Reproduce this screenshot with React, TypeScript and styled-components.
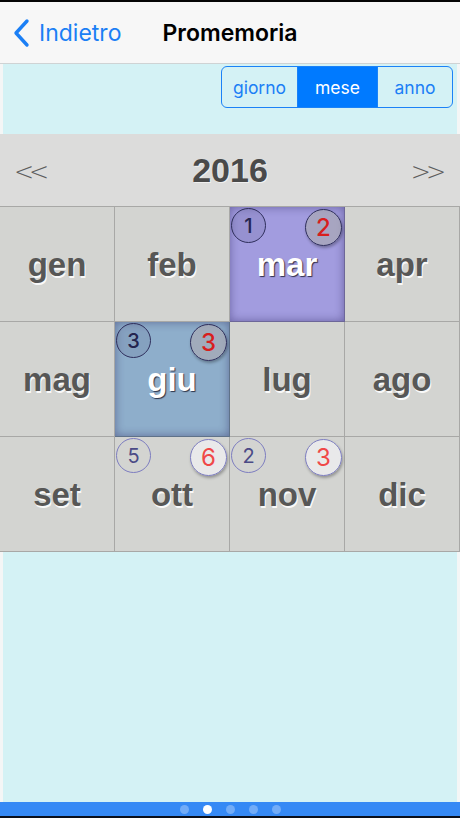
import React from "react";
import styled, { createGlobalStyle } from "styled-components";

const Global = createGlobalStyle`
  html, body { margin: 0; padding: 0; background: #000; }
  #root { width: 460px; }
`;

const Screen = styled.div`
  width: 460px;
  height: 818px;
  box-sizing: border-box;
  border-top: 2px solid #050505;
  border-bottom: 2px solid #0a0f1c;
  display: flex;
  flex-direction: column;
  font-family: "Liberation Sans", Arial, sans-serif;
  overflow: hidden;
`;

const NavBar = styled.div`
  height: 62px;
  flex: none;
  box-sizing: border-box;
  background: #f7f7f7;
  border-bottom: 1px solid #cfd3d4;
  display: flex;
  align-items: center;
  position: relative;
`;

const BackButton = styled.div`
  display: flex;
  align-items: center;
  gap: 9px;
  padding-left: 12px;
  color: #1b7ff5;
  font-family: Inter, "Liberation Sans", sans-serif;
  font-size: 23px;
`;

const Title = styled.div`
  position: absolute;
  left: 0;
  right: 0;
  text-align: center;
  pointer-events: none;
  font-family: Inter, "Liberation Sans", sans-serif;
  font-weight: 600;
  font-size: 23px;
  color: #000;
`;

const Content = styled.div`
  flex: 1;
  background: #d4f2f5;
  border-left: 3px solid #f4f6f6;
  border-right: 3px solid #f4f6f6;
  display: flex;
  flex-direction: column;
`;

const SegRow = styled.div`
  display: flex;
  justify-content: flex-end;
  padding: 2px 4px 0 0;
`;

const Segmented = styled.div`
  display: flex;
  height: 42px;
  box-sizing: border-box;
  border: 1.5px solid #1b82f7;
  border-radius: 6px;
  overflow: hidden;
`;

const Segment = styled.div<{ $active?: boolean; $w: number }>`
  width: ${(p) => p.$w}px;
  display: flex;
  align-items: center;
  justify-content: center;
  font-family: Inter, "Liberation Sans", sans-serif;
  font-size: 17.5px;
  color: ${(p) => (p.$active ? "#ffffff" : "#1b7ff5")};
  background: ${(p) => (p.$active ? "#007aff" : "transparent")};
  & + & {
    border-left: 1px solid #1b82f7;
  }
`;

const Calendar = styled.div`
  margin: 26px -3px 0;
  display: flex;
  flex-direction: column;
`;

const YearBar = styled.div`
  height: 72px;
  background: #dcdcdb;
  display: flex;
  align-items: center;
  justify-content: space-between;
  padding: 0 14px 0 14px;
  position: relative;
`;

const Arrow = styled.div`
  font-size: 24px;
  color: #5e5e5e;
  letter-spacing: -5px;
  font-family: "DejaVu Sans", sans-serif;
  font-weight: 200;
  margin-top: 4px;
  padding-right: 5px;
`;

const Year = styled.div`
  position: absolute;
  left: 0;
  right: 0;
  text-align: center;
  font-size: 34px;
  font-weight: bold;
  color: #4a4a4a;
  text-shadow: 1px 1px 0 rgba(255, 255, 255, 0.6);
`;

const Grid = styled.div`
  display: grid;
  grid-template-columns: repeat(4, 115px);
  border-top: 1px solid #a8a8a6;
`;

const Cell = styled.div<{ $bg?: string; $edge?: string }>`
  position: relative;
  height: 115px;
  box-sizing: border-box;
  background: ${(p) => p.$bg ?? "#d3d4d1"};
  border-right: 1px solid ${(p) => p.$edge ?? "#a8a8a6"};
  border-bottom: 1px solid ${(p) => p.$edge ?? "#a8a8a6"};
  box-shadow: ${(p) => (p.$bg ? "inset 0 0 10px rgba(40, 30, 90, 0.45)" : "none")};
  display: flex;
  align-items: center;
  justify-content: center;
`;

const MonthName = styled.span<{ $selected?: boolean }>`
  font-size: 33px;
  font-weight: bold;
  color: ${(p) => (p.$selected ? "#ffffff" : "#575756")};
  text-shadow: ${(p) =>
    p.$selected ? "1px 1px 1px rgba(20,20,40,0.8)" : "1px 1.5px 0 rgba(255,255,255,0.9)"};
  margin-top: 2px;
`;

const Badge = styled.div<{ $side: "left" | "right"; $dark?: boolean }>`
  position: absolute;
  top: ${(p) => (p.$side === "left" ? 1 : 2)}px;
  ${(p) => (p.$side === "left" ? "left: 1px;" : "right: 2px;")}
  width: ${(p) => (p.$side === "left" ? 35 : 37)}px;
  height: ${(p) => (p.$side === "left" ? 35 : 37)}px;
  box-sizing: border-box;
  border-radius: 50%;
  display: flex;
  align-items: center;
  justify-content: center;
  font-family: Inter, "Liberation Sans", sans-serif;
  font-size: ${(p) => (p.$side === "left" ? 20 : 24)}px;
  font-weight: ${(p) => (p.$dark ? 500 : 400)};
  border: ${(p) => (p.$dark ? "1.5px solid #2f2f5c" : "1px solid #7d7dc0")};
  color: ${(p) =>
    p.$side === "left" ? (p.$dark ? "#25254f" : "#4b4b86") : p.$dark ? "#d81e1e" : "#f04848"};
  background: ${(p) =>
    p.$side === "left"
      ? p.$dark
        ? "rgba(90,90,130,0.15)"
        : "transparent"
      : p.$dark
      ? "rgba(170,170,180,0.7)"
      : "rgba(236,236,238,0.85)"};
  box-shadow: ${(p) =>
    p.$side === "right" ? "1px 2px 3px rgba(0,0,0,0.3)" : "none"};
`;

const Spacer = styled.div`
  flex: 1;
`;

const PageBar = styled.div`
  height: 14px;
  flex: none;
  background: #3589f5;
  display: flex;
  align-items: center;
  justify-content: center;
  gap: 14px;
`;

const Dot = styled.div<{ $active?: boolean }>`
  width: 9px;
  height: 9px;
  border-radius: 50%;
  background: ${(p) => (p.$active ? "#ffffff" : "rgba(255,255,255,0.3)")};
`;

type Month = {
  name: string;
  bg?: string;
  edge?: string;
  left?: number;
  right?: number;
};

const months: Month[] = [
  { name: "gen" },
  { name: "feb" },
  { name: "mar", bg: "#a29cdf", edge: "#6d6799", left: 1, right: 2 },
  { name: "apr" },
  { name: "mag" },
  { name: "giu", bg: "#8eaecb", edge: "#5f7289", left: 3, right: 3 },
  { name: "lug" },
  { name: "ago" },
  { name: "set" },
  { name: "ott", left: 5, right: 6 },
  { name: "nov", left: 2, right: 3 },
  { name: "dic" },
];

export default function App() {
  return (
    <>
      <Global />
      <Screen>
        <NavBar>
          <BackButton>
            <svg width="18" height="30" viewBox="0 0 18 30">
              <path
                d="M15 3 L4 15 L15 27"
                fill="none"
                stroke="#1b7ff5"
                strokeWidth="3.4"
                strokeLinecap="round"
                strokeLinejoin="round"
              />
            </svg>
            <span>Indietro</span>
          </BackButton>
          <Title>Promemoria</Title>
        </NavBar>
        <Content>
          <SegRow>
            <Segmented>
              <Segment $w={75}>giorno</Segment>
              <Segment $w={79} $active>
                mese
              </Segment>
              <Segment $w={74}>anno</Segment>
            </Segmented>
          </SegRow>
          <Calendar>
            <YearBar>
              <Arrow>&lt;&lt;</Arrow>
              <Year>2016</Year>
              <Arrow>&gt;&gt;</Arrow>
            </YearBar>
            <Grid>
              {months.map((m) => (
                <Cell key={m.name} $bg={m.bg} $edge={m.edge}>
                  {m.left !== undefined && (
                    <Badge $side="left" $dark={!!m.bg}>
                      {m.left}
                    </Badge>
                  )}
                  {m.right !== undefined && (
                    <Badge $side="right" $dark={!!m.bg}>
                      {m.right}
                    </Badge>
                  )}
                  <MonthName $selected={!!m.bg}>{m.name}</MonthName>
                </Cell>
              ))}
            </Grid>
          </Calendar>
          <Spacer />
        </Content>
        <PageBar>
          <Dot />
          <Dot $active />
          <Dot />
          <Dot />
          <Dot />
        </PageBar>
      </Screen>
    </>
  );
}
